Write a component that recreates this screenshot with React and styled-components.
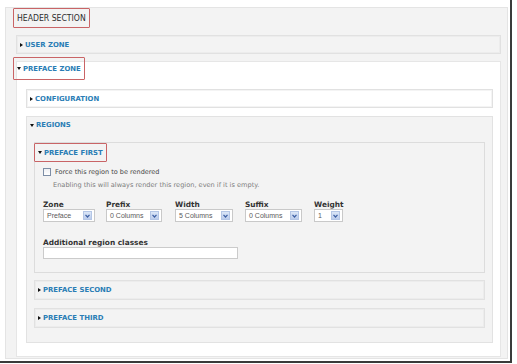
import React from 'react';
import styled, { createGlobalStyle } from 'styled-components';

const GlobalStyle = createGlobalStyle`
  html, body {
    margin: 0;
    padding: 0;
    background: #fff;
  }
  body {
    font-family: "DejaVu Sans", Verdana, sans-serif;
  }
`;

const Frame = styled.div`
  box-sizing: border-box;
  width: 512px;
  height: 363px;
  padding: 7px 2px 2px 5px;
  border-right: 2px solid #3a3a3a;
  border-bottom: 2px solid #3a3a3a;
`;

const Panel = styled.div`
  box-sizing: border-box;
  height: 100%;
  display: flex;
  flex-direction: column;
  background: #f3f3f3;
  border: 1px solid #e4e4e4;
  padding: 0 6px 1px 10px;
`;

const Highlight = styled.div`
  box-sizing: border-box;
  display: flex;
  align-items: center;
  align-self: flex-start;
  height: ${p => p.h}px;
  margin: ${p => p.m};
  padding: 0 ${p => p.pad || 3}px;
  border: 1px solid #c96466;
  border-radius: 1px;
`;

const SectionTitle = styled.span`
  font-family: "DejaVu Sans Condensed", "DejaVu Sans", sans-serif;
  font-size: 8.6px;
  color: #2e2e2e;
`;

const Arrow = styled.span`
  display: inline-block;
  width: 0;
  height: 0;
  margin-right: 2px;
  ${p => p.open ? `
    border-top: 3px solid #111;
    border-left: 2px solid transparent;
    border-right: 2px solid transparent;
  ` : `
    border-left: 3px solid #111;
    border-top: 2px solid transparent;
    border-bottom: 2px solid transparent;
  `}
`;

const LinkTitle = styled.span`
  display: inline-flex;
  align-items: center;
  font-size: 6.9px;
  font-weight: bold;
  color: #2a7db5;
`;

const Collapsed = styled.div`
  box-sizing: border-box;
  height: ${p => p.h || 19}px;
  margin-top: ${p => p.mt || 0}px;
  display: flex;
  align-items: center;
  padding-left: 3px;
  background: ${p => p.white ? '#fff' : '#f3f3f3'};
  border: 1px solid #e1e1e1;
  box-shadow: inset 0 0 0 1px ${p => p.white ? '#f4f4f4' : '#ececec'};
`;

const Zone = styled.div`
  box-sizing: border-box;
  flex: 1;
  margin-top: 7px;
  display: flex;
  flex-direction: column;
  background: #fff;
  border: 1px solid #e6e6e6;
  padding: 0 7px 0 9px;
`;

const Regions = styled.div`
  box-sizing: border-box;
  margin-top: 8px;
  display: flex;
  flex-direction: column;
  background: #f3f3f3;
  border: 1px solid #e2e2e2;
  padding: 0 7px 14px 7px;
`;

const RegionsHead = styled.div`
  height: 16px;
  margin: 0 0 9px -4px;
  display: flex;
  align-items: center;
`;

const Region = styled.div`
  box-sizing: border-box;
  height: 131px;
  display: flex;
  flex-direction: column;
  background: #f3f3f3;
  border: 1px solid #dcdcdc;
`;

const RegionBody = styled.div`
  display: flex;
  flex-direction: column;
  padding-left: 8px;
`;

const CheckRow = styled.label`
  display: flex;
  align-items: center;
  height: 10px;
  margin-top: 5px;
  font-size: 6.5px;
  color: #444;
`;

const Box = styled.span`
  box-sizing: border-box;
  width: 8px;
  height: 8px;
  margin-right: 4px;
  border: 1px solid #7d8ea6;
  background: linear-gradient(#eef0f3, #fff);
`;

const Description = styled.div`
  margin: 4px 0 0 10px;
  height: 9px;
  font-size: 6.6px;
  color: #7c7c7c;
  line-height: 9px;
`;

const Fields = styled.div`
  display: flex;
  margin-top: 10px;
`;

const Field = styled.div`
  display: flex;
  flex-direction: column;
  width: ${p => p.w}px;
  margin-right: ${p => p.gap || 0}px;
`;

const Label = styled.div`
  height: 9px;
  line-height: 9px;
  font-size: 7.4px;
  font-weight: bold;
  color: #333;
  white-space: nowrap;
`;

const Select = styled.div`
  box-sizing: border-box;
  height: 13px;
  display: flex;
  align-items: center;
  justify-content: space-between;
  padding: 0 2px 0 3px;
  background: #fff;
  border: 1px solid #c9c9c9;
  font-family: "Liberation Sans", Arial, sans-serif;
  font-size: 7px;
  color: #5a5a5a;
`;

const DropButton = styled.span`
  box-sizing: border-box;
  width: 9px;
  height: 9px;
  display: flex;
  align-items: center;
  justify-content: center;
  background: linear-gradient(#dbe6f7, #bccdec);
  border: 1px solid #b4c6e6;
`;

const Extra = styled.div`
  display: flex;
  flex-direction: column;
  margin-top: 16px;
`;

const TextInput = styled.div`
  box-sizing: border-box;
  width: 195px;
  height: 12px;
  background: #fff;
  border: 1px solid #cbcbcb;
`;

const Chevron = () => (
  <svg width="5" height="4" viewBox="0 0 5 4">
    <path d="M0.5 0.8 L2.5 3 L4.5 0.8" fill="none" stroke="#3d5fa3" strokeWidth="1.2" />
  </svg>
);

const fields = [
  { label: 'Zone', value: 'Preface', w: 52, gap: 11 },
  { label: 'Prefix', value: '0 Columns', w: 56, gap: 13 },
  { label: 'Width', value: '5 Columns', w: 58, gap: 12 },
  { label: 'Suffix', value: '0 Columns', w: 57, gap: 12 },
  { label: 'Weight', value: '1', w: 29 },
];

const Title = ({ open, children }) => (
  <LinkTitle>
    <Arrow open={open} />
    {children}
  </LinkTitle>
);

export default function App() {
  return (
    <>
      <GlobalStyle />
      <Frame>
        <Panel>
          <Highlight h={20} m="0 0 0 -3px">
            <SectionTitle>HEADER SECTION</SectionTitle>
          </Highlight>

          <Collapsed mt={7}>
            <Title>USER ZONE</Title>
          </Collapsed>

          <Zone>
            <Highlight h={23} m="-5px 0 0 -13px">
              <Title open>PREFACE ZONE</Title>
            </Highlight>

            <Collapsed white mt={9}>
              <Title>CONFIGURATION</Title>
            </Collapsed>

            <Regions>
              <RegionsHead>
                <Title open>REGIONS</Title>
              </RegionsHead>

              <Region>
                <Highlight h={19} m="0 0 0 -1px">
                  <Title open>PREFACE FIRST</Title>
                </Highlight>
                <RegionBody>
                  <CheckRow>
                    <Box />
                    Force this region to be rendered
                  </CheckRow>
                  <Description>
                    Enabling this will always render this region, even if it is empty.
                  </Description>
                  <Fields>
                    {fields.map(f => (
                      <Field key={f.label} w={f.w} gap={f.gap}>
                        <Label>{f.label}</Label>
                        <Select>
                          {f.value}
                          <DropButton><Chevron /></DropButton>
                        </Select>
                      </Field>
                    ))}
                  </Fields>
                  <Extra>
                    <Label>Additional region classes</Label>
                    <TextInput />
                  </Extra>
                </RegionBody>
              </Region>

              <Collapsed mt={7} h={20}>
                <Title>PREFACE SECOND</Title>
              </Collapsed>
              <Collapsed mt={8} h={20}>
                <Title>PREFACE THIRD</Title>
              </Collapsed>
            </Regions>
          </Zone>
        </Panel>
      </Frame>
    </>
  );
}
